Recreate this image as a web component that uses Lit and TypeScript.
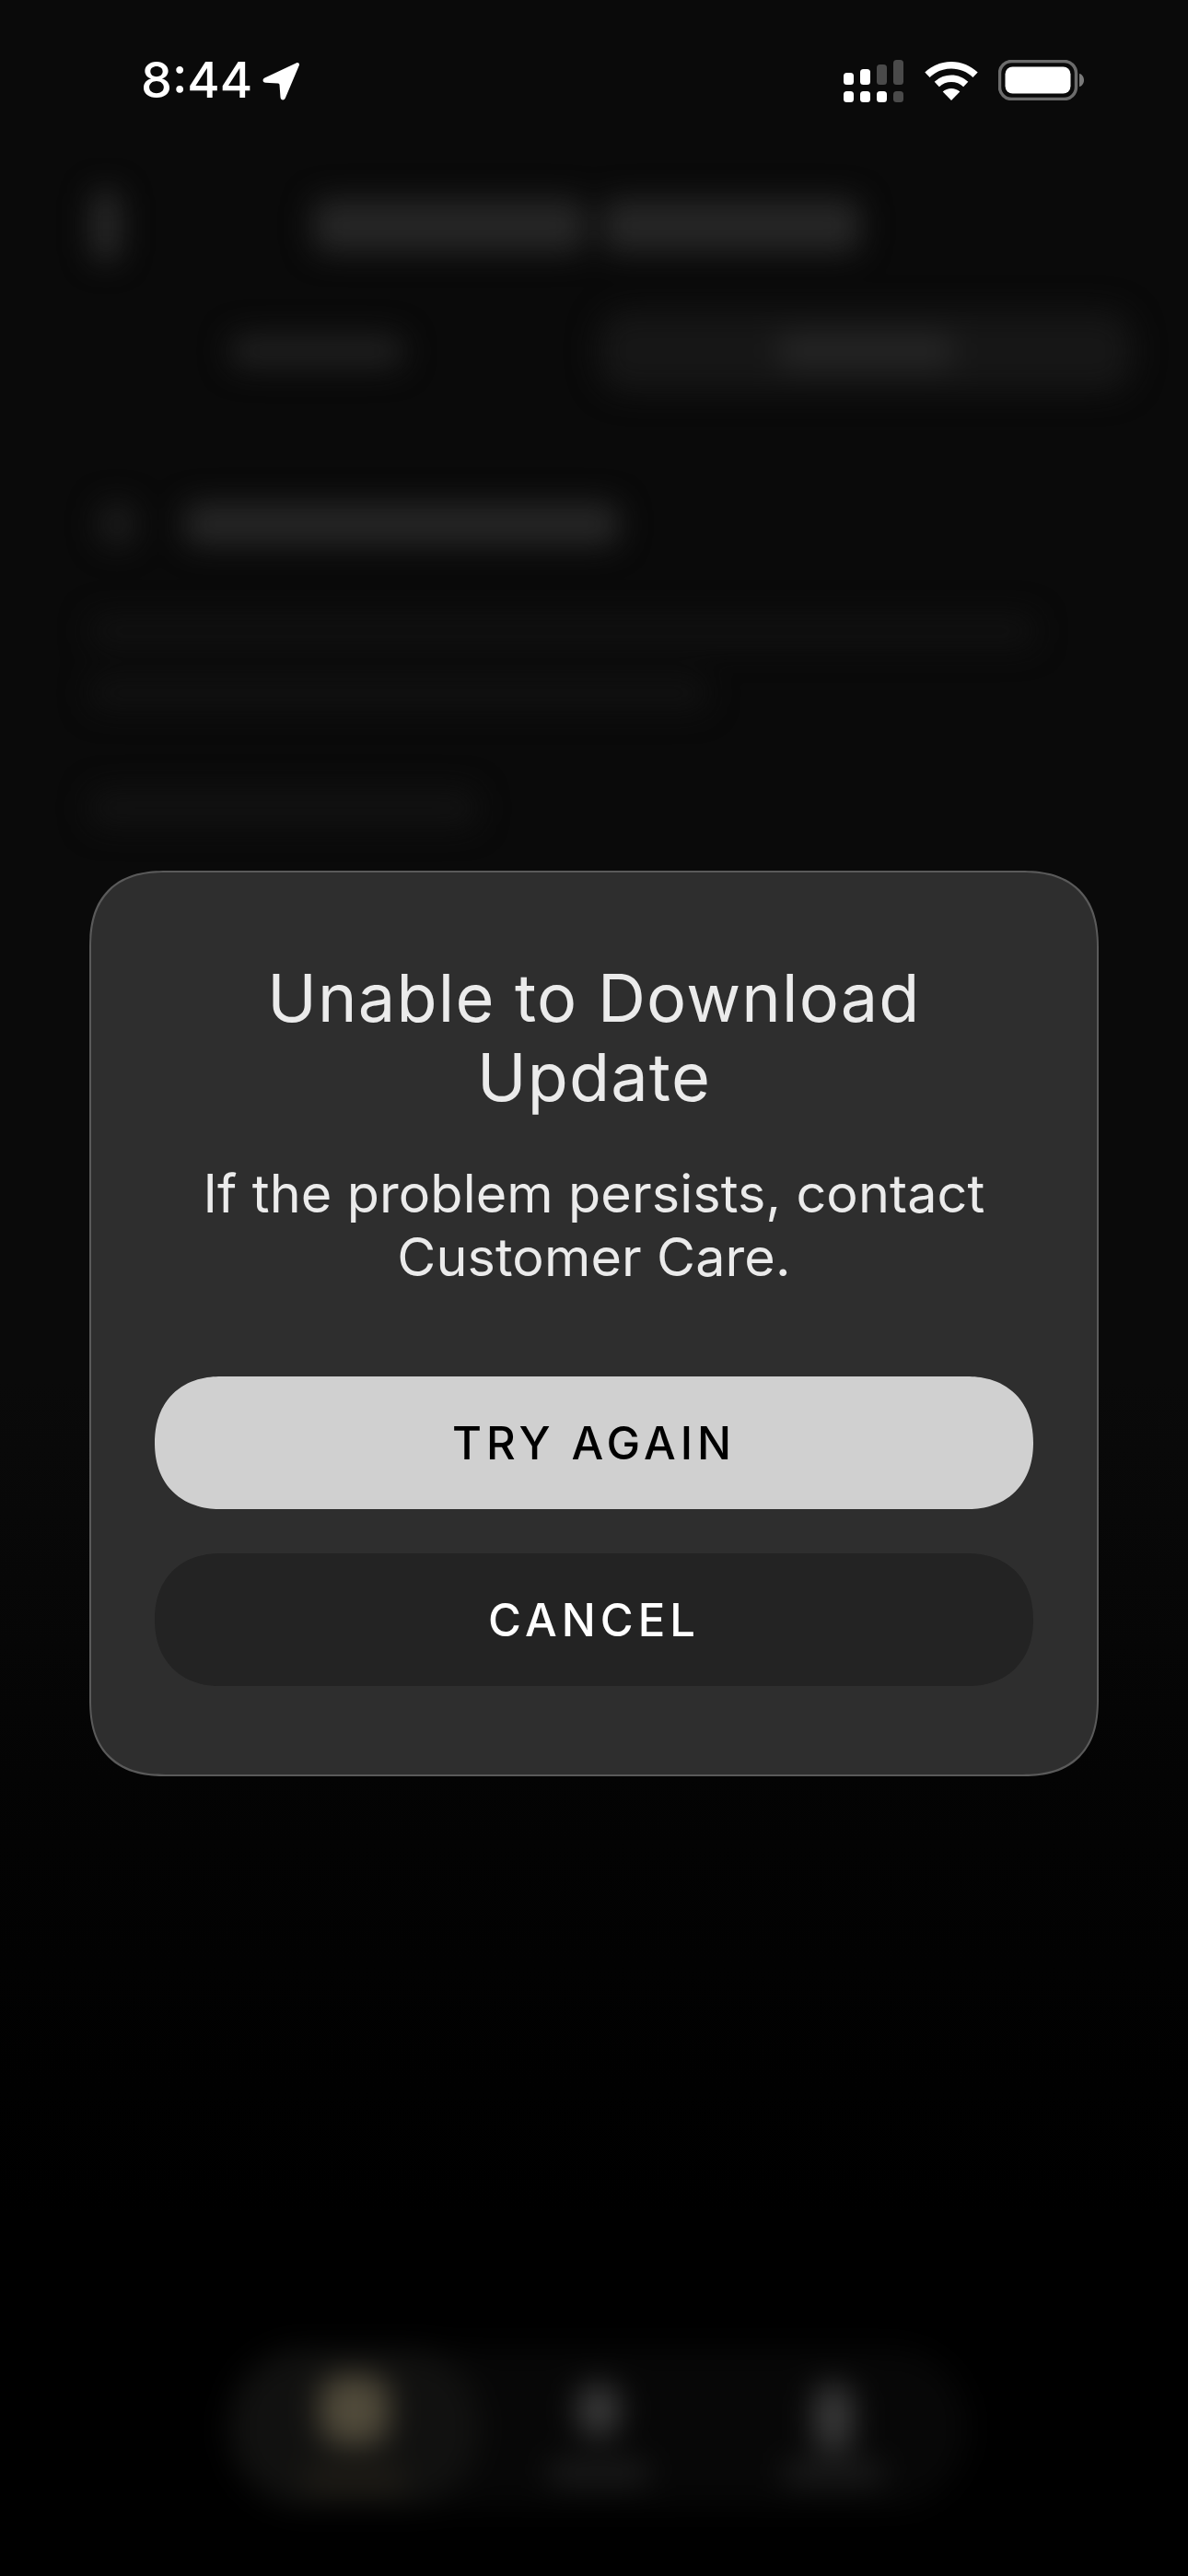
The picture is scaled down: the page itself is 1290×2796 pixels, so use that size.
import { LitElement, html, css } from "lit";
import { customElement } from "lit/decorators.js";

@customElement("app-root")
export class AppRoot extends LitElement {
  static styles = css`
    :host { display: block; width: 1290px; height: 2796px; position: relative; overflow: hidden; background: linear-gradient(#0a0a0a 0, #0a0a0a 1500px, #030303 2000px, #000 2400px); font-family: Inter, "Noto Sans", sans-serif; }
    .backdrop { display: flex; flex-direction: column; height: 2796px; box-sizing: border-box; padding: 215px 60px 76px 40px; filter: blur(16px); }
    .blob { background: #262626; border-radius: 14px; flex: none; }
    .head { display: flex; align-items: center; height: 60px; }
    .chev { width: 30px; height: 76px; margin-left: 60px; background: #2a2a2a; border-radius: 12px; }
    .head-t { width: 296px; height: 58px; margin-left: 210px; }
    .head-u { width: 280px; height: 58px; margin-left: 18px; }
    .tabs { display: flex; align-items: center; height: 84px; margin-top: 64px; }
    .tab-l { width: 188px; height: 36px; margin-left: 210px; background: #1f1f1f; }
    .tab-r { width: 580px; height: 88px; margin-left: 212px; border-radius: 32px; background: #161616; display: flex; align-items: center; justify-content: center; }
    .tab-r i { display: block; width: 190px; height: 38px; background: #242424; border-radius: 12px; }
    .sec { display: flex; align-items: center; height: 50px; margin-top: 121px; }
    .sec-i { width: 38px; height: 46px; margin-left: 68px; background: #1c1c1c; }
    .sec-t { width: 472px; height: 46px; margin-left: 54px; background: #262626; }
    .ln1 { width: 1026px; height: 34px; margin: 74px 0 0 58px; background: #111; }
    .ln2 { width: 670px; height: 36px; margin: 32px 0 0 58px; background: #111; }
    .ln3 { width: 420px; height: 40px; margin: 87px 0 0 58px; background: #121212; }
    .nav { margin: auto 0 0 210px; width: 800px; height: 170px; border-radius: 80px; background: #070707; display: flex; position: relative; }
    .item { display: flex; flex-direction: column; align-items: center; }
    .on { width: 270px; height: 170px; border-radius: 80px; background: #111110; }
    .it2 { width: 120px; margin-left: 70px; }
    .it3 { width: 120px; margin-left: 135px; }
    .ic { border-radius: 24px; margin-top: 36px; }
    .ic-g { width: 76px; height: 76px; background: #504a3a; margin-top: 28px; }
    .ic-a { width: 48px; height: 60px; background: #383838; }
    .ic-b { width: 44px; height: 76px; background: #383838; }
    .lb { height: 28px; margin-top: 24px; border-radius: 10px; background: #1a1a1a; width: 110px; }
    .ic-b + .lb { margin-top: 8px; }
    .lb-g { background: #1f1c16; margin-top: 24px; }

    .status { position: absolute; inset: 0 0 auto 0; height: 180px; display: flex; align-items: flex-start; justify-content: space-between; padding: 56px 112px 0 153px; box-sizing: border-box; }
    .left { display: flex; align-items: center; gap: 10px; color: #fff; font-size: 54px; font-weight: 500; line-height: 62px; }
    .arrow { width: 42px; height: 42px; margin-top: 2px; }
    .right { display: flex; gap: 22px; margin-top: 9px; align-items: flex-start; }
    .right svg { display: block; }
    .wifi { margin-top: 2px; }

    .modal { position: absolute; left: 97px; top: 945px; width: 1096px; height: 983px; box-sizing: border-box; border: 2px solid #5a5a5a; border-radius: 84px; corner-shape: superellipse(1.3); background: #2e2e2e; padding: 93px 70px 0; display: flex; flex-direction: column; align-items: center; color: #ebebeb; text-align: center; }
    h1 { margin: 0; font-size: 72px; font-weight: 370; line-height: 86px; letter-spacing: 1.2px; white-space: nowrap; }
    p { margin: 49px 0 0; font-size: 57.500px; font-weight: 370; line-height: 69px; letter-spacing: 0.1px; white-space: nowrap; }
    .btn { flex: none; width: 954px; height: 144px; border-radius: 72px; corner-shape: superellipse(1.15); display: flex; align-items: center; justify-content: center; font-size: 49px; font-weight: 450; letter-spacing: 5px; }
    .primary { background: #d0d0d0; color: #000; margin-top: 95px; }
    .secondary { background: #232323; color: #fff; margin-top: 48px; }
  `;

  render() {
    return html`
      <div class="backdrop">
        <div class="head"><div class="chev"></div><div class="blob head-t"></div><div class="blob head-u"></div></div>
        <div class="tabs"><div class="blob tab-l"></div><div class="tab-r"><i></i></div></div>
        <div class="sec"><div class="blob sec-i"></div><div class="blob sec-t"></div></div>
        <div class="blob ln1"></div>
        <div class="blob ln2"></div>
        <div class="blob ln3"></div>
        <div class="nav">
          <div class="item on"><div class="ic ic-g"></div><div class="lb lb-g"></div></div>
          <div class="item it2"><div class="ic ic-a"></div><div class="lb"></div></div>
          <div class="item it3"><div class="ic ic-b"></div><div class="lb"></div></div>
        </div>
      </div>

      <div class="status">
        <div class="left">
          <span>8:44</span>
          <svg class="arrow" viewBox="0 0 42 42"><path d="M38 1.2 3.5 17.6c-3 1.4-2.400 5 .9 5.200l13.600.8c.9.1 1.400.6 1.500 1.500l1 13.400c.2 3.300 4 4 5.300 1L40.800 4c.8-2-1-3.700-2.800-2.800Z" fill="#fff"/></svg>
        </div>
        <div class="right">
          <svg width="66" height="46" viewBox="0 0 66 46">
            <g fill="#fff">
              <rect x="0" y="14" width="11" height="13" rx="3.500"/>
              <rect x="18" y="10" width="11" height="17" rx="3.500"/>
              <rect x="0" y="34" width="11" height="12" rx="3.500"/>
              <rect x="18" y="34" width="11" height="12" rx="3.500"/>
              <rect x="36" y="34" width="11" height="12" rx="3.500"/>
            </g>
            <g fill="#4a4a4a">
              <rect x="36" y="5" width="11" height="22" rx="3.500"/>
              <rect x="54" y="0" width="11" height="27" rx="3.500"/>
              <rect x="54" y="34" width="11" height="12" rx="3.500"/>
            </g>
          </svg>
          <svg class="wifi" width="58" height="42" viewBox="0 0 58 42">
            <g fill="#fff">
              <path d="M29 0C18 0 8 4.300 .3 11.500l5.300 5.500C11.700 11 20 7.600 29 7.600s17.300 3.400 23.400 9.400l5.300-5.500C50 4.300 40 0 29 0Z"/>
              <path d="M29 14.500c-7 0-13.400 2.700-18.300 7.300l5.200 5.500c3.500-3.300 8.100-5.200 13.100-5.200s9.600 1.900 13.100 5.200l5.200-5.500C42.400 17.200 36 14.500 29 14.500Z"/>
              <path d="M29 29c-3.500 0-6.800 1.300-9.300 3.600L29 42l9.300-9.400C35.800 30.300 32.500 29 29 29Z"/>
            </g>
          </svg>
          <svg width="94" height="44" viewBox="0 0 94 44">
            <rect x="1.500" y="1.500" width="83" height="41" rx="13" fill="none" stroke="#6c6c6c" stroke-width="3.500"/>
            <rect x="7.500" y="7.500" width="71" height="29" rx="8" fill="#fff"/>
            <path d="M88 15c3 .6 5 3.500 5 7s-2 6.400-5 7Z" fill="#7a7a7a"/>
          </svg>
        </div>
      </div>

      <div class="modal">
        <h1>Unable to Download<br />Update</h1>
        <p>If the problem persists, contact<br />Customer Care.</p>
        <div class="btn primary">TRY AGAIN</div>
        <div class="btn secondary">CANCEL</div>
      </div>
    `;
  }
}
